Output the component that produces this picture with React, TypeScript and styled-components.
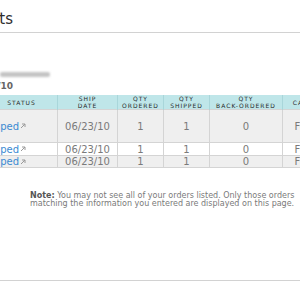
import React from 'react';
import styled, { createGlobalStyle } from 'styled-components';

const GlobalStyle = createGlobalStyle`
  html, body {
    margin: 0;
    padding: 0;
    background: #ffffff;
  }
  body {
    width: 300px;
    height: 300px;
    overflow: hidden;
    font-family: "DejaVu Sans", Verdana, sans-serif;
  }
`;

type Shipment = {
  status: string;
  shipDate: string;
  ordered: number;
  shipped: number;
  backOrdered: number;
  carrier: string;
  height: number;
  shaded: boolean;
};

const shipments: Shipment[] = [
  { status: 'Shipped', shipDate: '06/23/10', ordered: 1, shipped: 1, backOrdered: 0, carrier: 'FedEx', height: 32, shaded: true },
  { status: 'Shipped', shipDate: '06/23/10', ordered: 1, shipped: 1, backOrdered: 0, carrier: 'FedEx', height: 12, shaded: false },
  { status: 'Shipped', shipDate: '06/23/10', ordered: 1, shipped: 1, backOrdered: 0, carrier: 'FedEx', height: 11, shaded: true },
];

export default function App() {
  return (
    <>
      <GlobalStyle />
      <Page>
        <TitleBar>
          <RightEdge width={13}>
            <Title>Order Status Results</Title>
          </RightEdge>
        </TitleBar>

        <Redacted />

        <RightEdge width={13}>
          <OrderDate>Order Date: 06/23/10</OrderDate>
        </RightEdge>

        <Table>
          <colgroup>
            <col style={{ width: 72 }} />
            <col style={{ width: 60 }} />
            <col style={{ width: 46 }} />
            <col style={{ width: 46 }} />
            <col style={{ width: 73 }} />
            <col style={{ width: 54 }} />
          </colgroup>
          <thead>
            <tr>
              <Th>Status</Th>
              <Th>Ship<br />Date</Th>
              <Th>Qty<br />Ordered</Th>
              <Th>Qty<br />Shipped</Th>
              <Th>Qty<br />Back-Ordered</Th>
              <Th>Carrier</Th>
            </tr>
          </thead>
          <tbody>
            {shipments.map((s, i) => (
              <Row key={i} shaded={s.shaded}>
                <StatusCell style={{ height: s.height }}>
                  <StatusInner>
                    <StatusLink>{s.status}</StatusLink>
                    <ArrowIcon width="6" height="6" viewBox="0 0 6 6">
                      <path d="M1 5 L5 1 M2 1 H5 V4" fill="none" stroke="#9a9a9a" strokeWidth="1" />
                    </ArrowIcon>
                  </StatusInner>
                </StatusCell>
                <Td>{s.shipDate}</Td>
                <Td>{s.ordered}</Td>
                <Td>{s.shipped}</Td>
                <Td>{s.backOrdered}</Td>
                <Td>{s.carrier}</Td>
              </Row>
            ))}
          </tbody>
        </Table>

        <Note>
          <strong>Note:</strong> You may not see all of your orders listed. Only those orders
          <br />
          matching the information you entered are displayed on this page.
        </Note>

        <Footer />
      </Page>
    </>
  );
}

const Page = styled.div`
  width: 300px;
  display: flex;
  flex-direction: column;
`;

const TitleBar = styled.div`
  display: flex;
  padding: 12px 0 5px;
  border-bottom: 1px solid #d2d2d2;
`;

const RightEdge = styled.div<{ width: number }>`
  width: ${(p) => p.width}px;
  display: flex;
  justify-content: flex-end;
  white-space: nowrap;
`;

const Title = styled.h1`
  margin: 0;
  font-size: 15px;
  line-height: 15px;
  font-weight: normal;
  color: #2e2e2e;
`;

const Redacted = styled.div`
  width: 50px;
  height: 5px;
  margin-top: 39px;
  background: #c4c4c4;
  border-radius: 2px;
  filter: blur(1px);
`;

const OrderDate = styled.div`
  margin-top: 5px;
  font-size: 9px;
  line-height: 9px;
  font-weight: bold;
  color: #666666;
`;

const Table = styled.table`
  margin: 4px 0 0 -15px;
  width: 351px;
  border-collapse: collapse;
  table-layout: fixed;
`;

const Th = styled.th`
  height: 14px;
  padding: 0;
  background: #bfe6e9;
  border-left: 1px solid #a9d6da;
  border-right: 1px solid #a9d6da;
  font-size: 6px;
  line-height: 7px;
  letter-spacing: 1px;
  font-weight: normal;
  text-transform: uppercase;
  color: #2a2a2a;
  text-align: center;
  vertical-align: middle;
  white-space: nowrap;
`;

const Row = styled.tr<{ shaded: boolean }>`
  background: ${(p) => (p.shaded ? '#efefef' : '#ffffff')};
`;

const Td = styled.td`
  padding: 0;
  border: 1px solid #d4d4d4;
  font-size: 10px;
  line-height: 11px;
  color: #7a7a7a;
  text-align: center;
  vertical-align: middle;
  white-space: nowrap;
`;

const StatusCell = styled(Td)`
  padding-right: 31px;
`;

const StatusInner = styled.div`
  display: flex;
  justify-content: flex-end;
  align-items: center;
  gap: 1px;
`;

const StatusLink = styled.a`
  color: #3b8ad2;
  text-decoration: none;
`;

const ArrowIcon = styled.svg`
  flex: none;
`;

const Note = styled.p`
  margin: 24px 0 0 30px;
  font-size: 8px;
  line-height: 8px;
  color: #7a7a7a;
  white-space: nowrap;

  strong {
    color: #555555;
  }
`;

const Footer = styled.div`
  margin-top: 72px;
  border-top: 1px solid #d2d2d2;
`;
